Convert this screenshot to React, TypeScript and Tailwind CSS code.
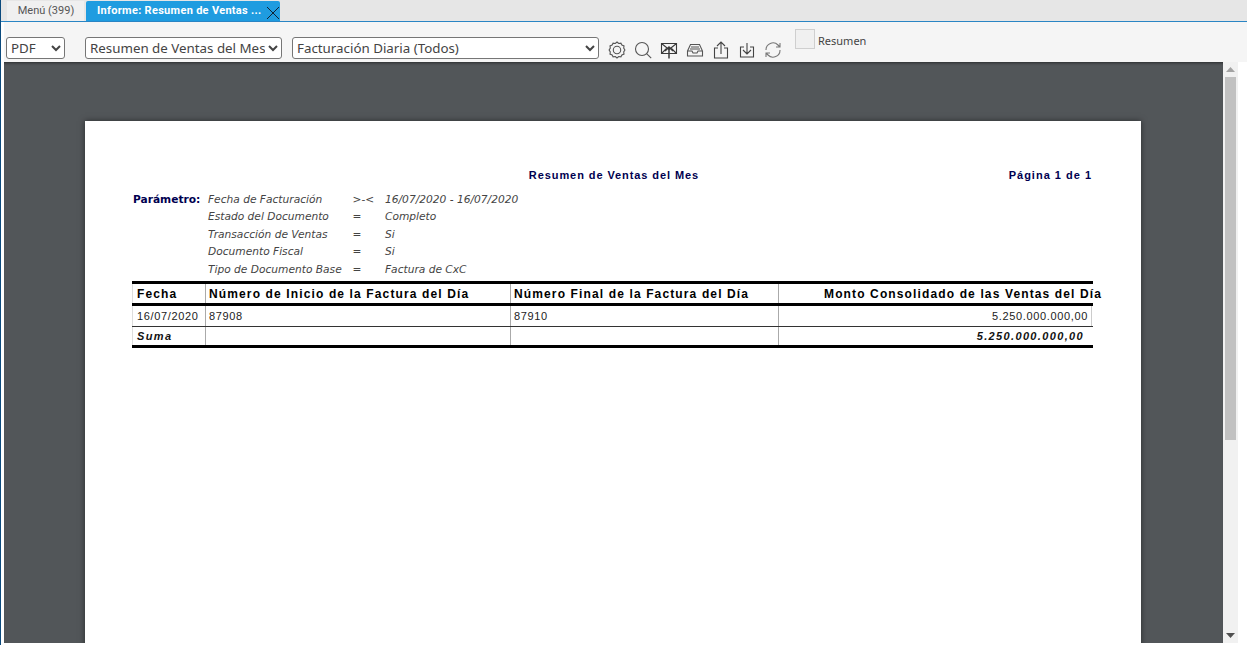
import React from "react";

const Icon = ({ children, stroke = "#555" }: { children: React.ReactNode; stroke?: string }) => (
  <svg width={18} height={18} viewBox="0 0 18 18" fill="none" stroke={stroke} strokeWidth="1.1" className="shrink-0">
    {children}
  </svg>
);

const params = [
  ["Fecha de Facturación", ">-<", "16/07/2020 - 16/07/2020"],
  ["Estado del Documento", "=", "Completo"],
  ["Transacción de Ventas", "=", "Si"],
  ["Documento Fiscal", "=", "Si"],
  ["Tipo de Documento Base", "=", "Factura de CxC"],
];

export default function App() {
  return (
    <div className="w-[1247px] h-[645px] overflow-hidden bg-white flex flex-col border-l border-l-[#0b4a7d] font-['Noto_Sans',sans-serif]">
      <div className="h-[21px] shrink-0 bg-[#e6e6e6] flex items-end pl-[6px] gap-[2px]">
        <div className="w-[77px] h-[20px] pl-[1px] bg-[#f0f0f0] text-[11px] text-[#555] flex items-center justify-center font-['Roboto',sans-serif]">
          Menú (399)
        </div>
        <div className="w-[194px] h-[20px] bg-[#1f9ce0] rounded-t-[2px] flex items-center pl-[11px] text-[11px] font-bold tracking-[0.3px] text-white font-['Roboto',sans-serif] relative">
          Informe: Resumen de Ventas ...
          <svg width="14" height="14" viewBox="0 0 14 14" className="absolute right-0 top-[5px]" stroke="#123" strokeWidth="1">
            <path d="M1 1L13 13M13 1L1 13" />
          </svg>
        </div>
      </div>
      <div className="h-[41px] shrink-0 bg-[#f5f5f5] border-t border-t-[#2a85c4] flex items-start relative">
        <div className="w-[3px] h-full bg-white" />
        <select className="mt-[15px] ml-[2px] w-[59px] h-[22px] bg-white border border-[#767676] rounded-[3px] text-[13.33px] text-[#444]">
          <option>PDF</option>
        </select>
        <select className="mt-[15px] ml-[20px] w-[197px] h-[22px] bg-white border border-[#767676] rounded-[3px] text-[13.33px] text-[#444]">
          <option>Resumen de Ventas del Mes</option>
        </select>
        <select className="mt-[15px] ml-[10px] w-[307px] h-[22px] bg-white border border-[#767676] rounded-[3px] text-[13.33px] text-[#444]">
          <option>Facturación Diaria (Todos)</option>
        </select>
        <div className="mt-[19px] ml-[9px] flex gap-[8px]">
          <Icon>
            <path d="M9 1l1.7 1.5 2.2-.3 1 1.9 2.1.8-.3 2.2L16.9 9l-1.2 1.9.3 2.2-2.1.8-1 1.9-2.2-.3L9 17l-1.7-1.5-2.2.3-1-1.9-2.1-.8.3-2.2L1.1 9l1.2-1.9-.3-2.2 2.1-.8 1-1.9 2.2.3z" />
            <circle cx="9" cy="9" r="3.7" />
          </Icon>
          <Icon>
            <circle cx="8" cy="8" r="6.5" />
            <path d="M12.6 12.6l4.6 4.6" />
          </Icon>
          <Icon stroke="#3a3a3a">
            <path d="M1.5 2.5h15v10h-15zM1.5 2.5l7.5 6 7.5-6M1.5 12.5l5-5M16.5 12.5l-5-5" />
            <path d="M9 17.5V6M5 10l4-4 4 4" strokeWidth="1.5" />
          </Icon>
          <Icon>
            <path d="M1.5 10l3-6.5h9l3 6.5v5h-15zM1.5 10h4.5l1 2h4l1-2h4.5M5 6h8M4 8h10" />
          </Icon>
          <Icon stroke="#444">
            <path d="M6 7H2.5v10h13V7H12M9 13V1M5 5l4-4 4 4" />
          </Icon>
          <Icon stroke="#444">
            <path d="M6 6H2.5v10h13V6H12M9 13V2M5 9l4 4 4-4" />
          </Icon>
          <Icon stroke="#777">
            <path d="M2 9a7 7 0 0 1 12-5l2 2M16 9a7 7 0 0 1-12 5l-2-2M16 2v4h-4M2 16v-4h4" />
          </Icon>
        </div>
        <div className="mt-[7px] ml-[13px] w-[20px] h-[20px] border border-[#cfcfcf] bg-[#f0f0f0]" />
        <span className="mt-[11px] ml-[3px] text-[11px] text-[#444]">Resumen</span>
      </div>
      <div className="flex-1 min-h-0 flex pl-[3px] pr-[9px] pb-[2px]">
        <div className="flex-1 min-w-0 bg-[#525659] pt-[59px] pl-[81px] pr-[82px] overflow-hidden shadow-[inset_0_3px_3px_-2px_rgba(0,0,0,0.5)]">
          <div className="h-[600px] bg-white shadow-[0_0_6px_rgba(0,0,0,0.5)] pl-[47px] pr-[48px] pt-[48px] font-['Liberation_Sans',sans-serif]">
            <div className="relative h-[13px] text-[11px] font-bold text-[#000050] leading-[13px]">
              <div className="text-center ml-[3px] tracking-[0.92px]">Resumen de Ventas del Mes</div>
              <div className="absolute right-[1px] top-0 tracking-[1px]">Página 1 de 1</div>
            </div>
            <div className="mt-[9px] flex font-['DejaVu_Sans',sans-serif] text-[10.65px]">
              <div className="w-[76px] pl-[1px] h-[17px] leading-[17px] font-bold text-[#000050]">Parámetro:</div>
              <div className="italic text-[#444]">
                {params.map((p) => (
                  <div key={p[0]} className="flex h-[17.4px] leading-[17.4px]">
                    <div className="w-[144.5px]">{p[0]}</div>
                    <div className="w-[32.5px] not-italic">{p[1]}</div>
                    <div>{p[2]}</div>
                  </div>
                ))}
              </div>
            </div>
            <div className="mt-[3.5px] w-[961px] relative border-t-[3px] border-b-[3px] border-black">
              <div className="flex h-[22px] border-b-[3px] border-black text-[12px] font-bold tracking-[1.13px] text-black">
                <div className="w-[74px] pl-[4px] border-r border-[#aaa] border-l border-l-[#ddd] leading-[20px]">Fecha</div>
                <div className="w-[305px] pl-[3px] border-r border-[#aaa] leading-[20px]">Número de Inicio de la Factura del Día</div>
                <div className="w-[268px] pl-[3px] border-r border-[#aaa] leading-[20px]">Número Final de la Factura del Día</div>
                <div className="flex-1 relative leading-[20px]">
                  <span className="absolute left-[45px] whitespace-nowrap">Monto Consolidado de las Ventas del Día</span>
                </div>
              </div>
              <div className="flex h-[21px] border-b border-[#333] text-[11px] tracking-[0.65px] text-[#222]">
                <div className="w-[74px] pl-[4px] border-r border-l border-r-[#aaa] border-l-[#ddd] leading-[20px]">16/07/2020</div>
                <div className="w-[305px] pl-[3px] border-r border-[#aaa] leading-[20px]">87908</div>
                <div className="w-[268px] pl-[3px] border-r border-[#aaa] leading-[20px]">87910</div>
                <div className="w-[313px] pr-[3px] text-right border-r border-[#ccc] leading-[20px]">5.250.000.000,00</div>
              </div>
              <div className="flex h-[18px] text-[11px] font-bold italic tracking-[1.35px] text-[#111]">
                <div className="w-[74px] pl-[4px] border-r border-l border-r-[#aaa] border-l-[#ddd] leading-[18px]">Suma</div>
                <div className="w-[305px] border-r border-[#aaa]" />
                <div className="w-[268px] border-r border-[#aaa]" />
                <div className="flex-1 pr-[9px] text-right leading-[18px]">5.250.000.000,00</div>
              </div>
            </div>
          </div>
        </div>
        <div className="w-[15px] shrink-0 bg-[#f1f1f1] flex flex-col items-center relative">
          <svg width="9" height="6" viewBox="0 0 9 6" className="mt-[5px]"><path d="M4.5 0L9 5H0z" fill="#a3a3a3" /></svg>
          <div className="mt-[4px] w-[11px] h-[363px] bg-[#c1c1c1]" />
          <svg width="9" height="6" viewBox="0 0 9 6" className="absolute bottom-[5px]"><path d="M4.5 6L9 1H0z" fill="#505050" /></svg>
        </div>
      </div>
    </div>
  );
}
